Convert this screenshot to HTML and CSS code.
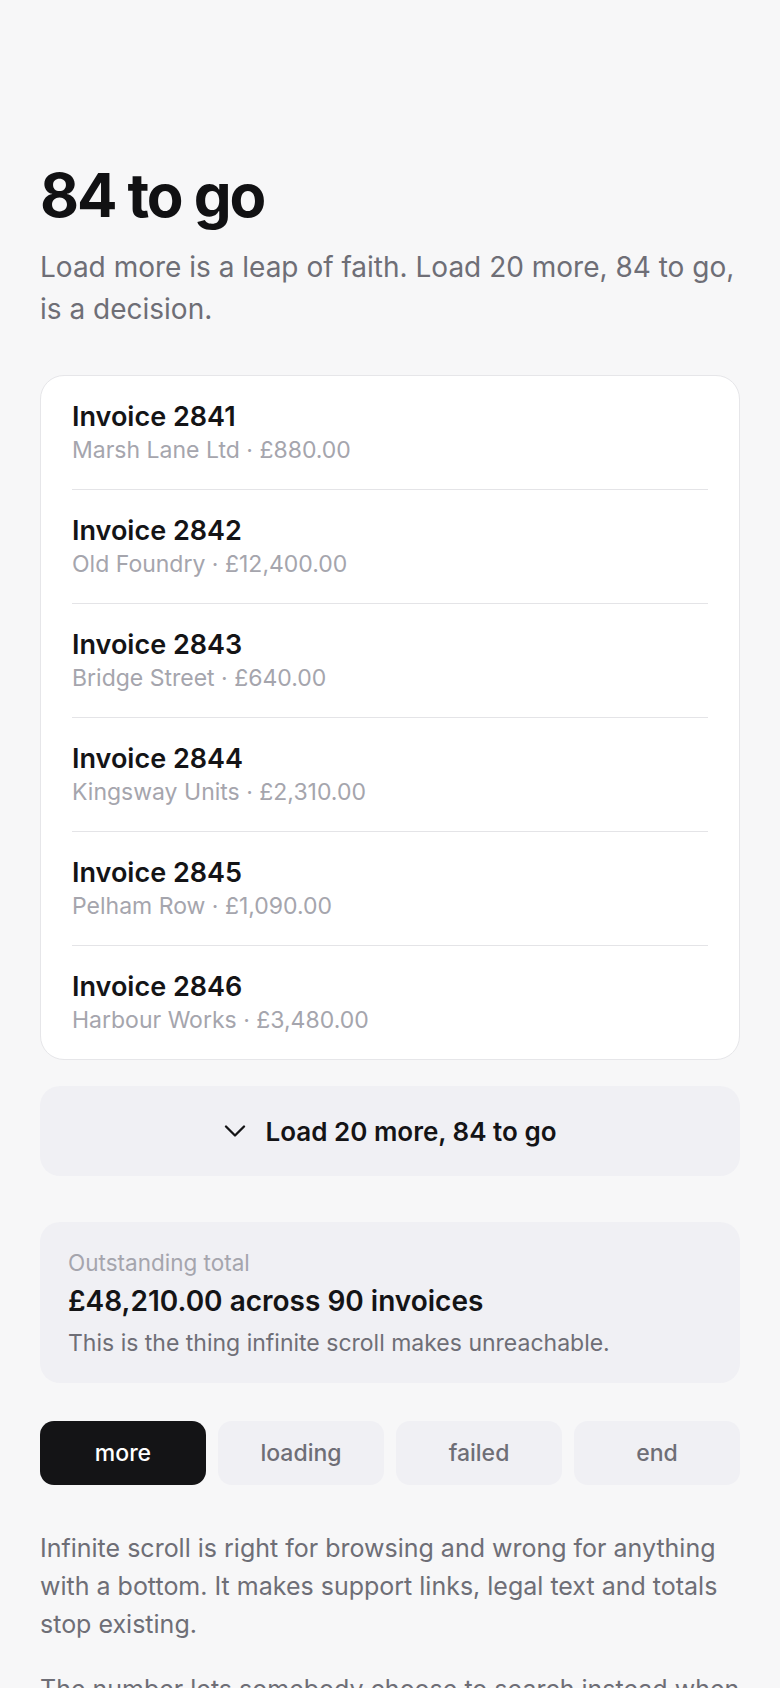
FILE: index.html
```html
<!DOCTYPE html>
<html lang="en">
<head>
<meta charset="utf-8">
<title>84 to go</title>
<link rel="stylesheet" href="styles.css">
</head>
<body>
<main class="page">
  <h1 class="title">84 to go</h1>
  <p class="lede">Load more is a leap of faith. Load 20 more, 84 to go, is a decision.</p>

  <ul class="list">
    <li class="row"><div class="row-title">Invoice 2841</div><div class="row-sub">Marsh Lane Ltd · £880.00</div></li>
    <li class="row"><div class="row-title">Invoice 2842</div><div class="row-sub">Old Foundry · £12,400.00</div></li>
    <li class="row"><div class="row-title">Invoice 2843</div><div class="row-sub">Bridge Street · £640.00</div></li>
    <li class="row"><div class="row-title">Invoice 2844</div><div class="row-sub">Kingsway Units · £2,310.00</div></li>
    <li class="row"><div class="row-title">Invoice 2845</div><div class="row-sub">Pelham Row · £1,090.00</div></li>
    <li class="row"><div class="row-title">Invoice 2846</div><div class="row-sub">Harbour Works · £3,480.00</div></li>
  </ul>

  <button class="load-more" type="button">
    <svg class="chev" width="22" height="12" viewBox="0 0 22 12" fill="none" stroke="currentColor" stroke-width="2.3" stroke-linecap="round" stroke-linejoin="round"><path d="M2 1.5l9 9 9-9"/></svg>
    <span>Load 20 more, 84 to go</span>
  </button>

  <section class="summary">
    <div class="summary-label">Outstanding total</div>
    <div class="summary-amount">£48,210.00 across 90 invoices</div>
    <div class="summary-note">This is the thing infinite scroll makes unreachable.</div>
  </section>

  <div class="tabs">
    <button class="tab is-active" type="button">more</button>
    <button class="tab" type="button">loading</button>
    <button class="tab" type="button">failed</button>
    <button class="tab" type="button">end</button>
  </div>

  <p class="body-text">Infinite scroll is right for browsing and wrong for anything with a bottom. It makes support links, legal text and totals stop existing.</p>
  <p class="body-text body-text--next">The number lets somebody choose to search instead when the list is longer than their patience.</p>
</main>
</body>
</html>
```

FILE: styles.css
```css
* { box-sizing: border-box; }

html, body {
  margin: 0;
  background: #f7f7f8;
}

body {
  font-family: Inter, "Noto Sans", "Liberation Sans", sans-serif;
  color: #141416;
}

.page {
  padding: 162px 40px 0;
}

.title {
  margin: 0;
  font-size: 60px;
  line-height: 66px;
  font-weight: 700;
  letter-spacing: -0.035em;
  color: #111113;
}

.lede {
  margin: 18px 0 0;
  font-size: 28px;
  line-height: 42px;
  color: #6e6e76;
}

.list {
  list-style: none;
  margin: 45px 0 0;
  padding: 0 31px;
  background: #ffffff;
  border: 1px solid #e6e6e9;
  border-radius: 24px;
}

.row {
  padding: 24px 0 23px;
  border-bottom: 1px solid #e4e4e7;
}

.row:last-child {
  border-bottom: none;
}

.row-title {
  font-size: 27px;
  line-height: 34px;
  font-weight: 600;
  color: #141416;
}

.row-sub {
  margin-top: 1px;
  font-size: 23px;
  line-height: 31px;
  color: #a5a5ad;
}

.load-more {
  margin-top: 26px;
  width: 100%;
  height: 90px;
  border: none;
  border-radius: 20px;
  background: #f0f0f4;
  color: #141416;
  font-family: inherit;
  font-size: 26px;
  font-weight: 600;
  display: flex;
  align-items: center;
  justify-content: center;
  gap: 20px;
}

.chev {
  flex: none;
}

.summary {
  margin-top: 46px;
  padding: 27px 28px 24px;
  background: #f0f0f4;
  border-radius: 20px;
}

.summary-label {
  font-size: 22.5px;
  line-height: 28px;
  color: #a5a5ad;
}

.summary-amount {
  margin-top: 6px;
  font-size: 28px;
  line-height: 36px;
  font-weight: 600;
  color: #141416;
}

.summary-note {
  margin-top: 8px;
  font-size: 23px;
  line-height: 32px;
  color: #6e6e76;
}

.tabs {
  margin-top: 38px;
  display: grid;
  grid-template-columns: repeat(4, 1fr);
  gap: 12px;
}

.tab {
  height: 64px;
  border: none;
  border-radius: 14px;
  background: #f0f0f4;
  color: #6e6e76;
  font-family: inherit;
  font-size: 23px;
  font-weight: 500;
}

.tab.is-active {
  background: #141416;
  color: #ffffff;
}

.body-text {
  margin: 44px 0 0;
  font-size: 25px;
  line-height: 38px;
  color: #6e6e76;
}

.body-text--next {
  margin-top: 27px;
}
```
